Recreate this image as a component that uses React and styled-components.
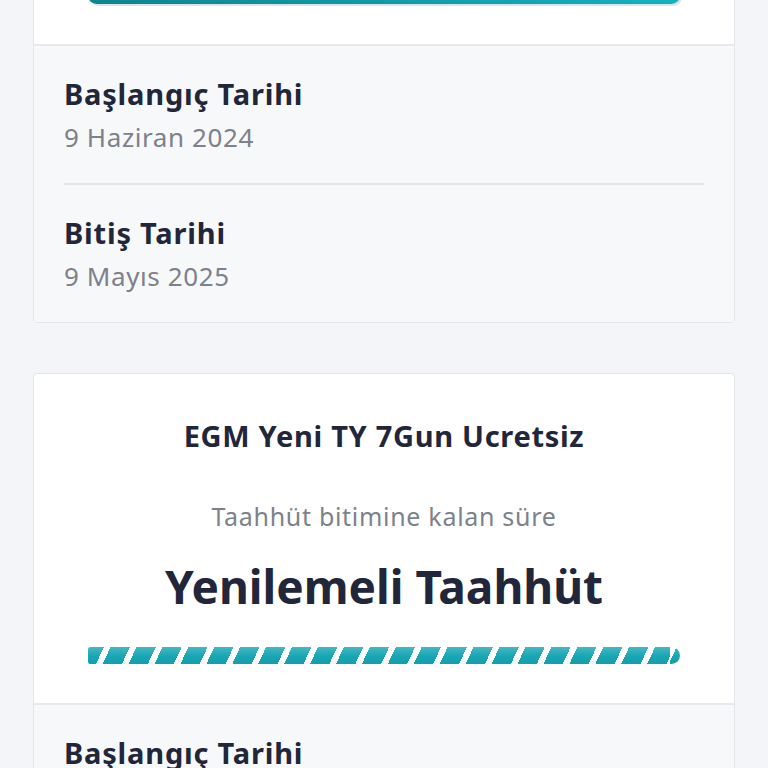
import React from "react";
import styled, { createGlobalStyle } from "styled-components";

const GlobalStyle = createGlobalStyle`
    body {
        margin: 0;
        background-color: #f4f5f8;
        font-family: "Noto Sans", "Open Sans", sans-serif;
    }
`;

const Page = styled.main`
    width: 768px;
    height: 768px;
    overflow: hidden;
    padding: 0 33px;
    box-sizing: border-box;
`;

const CardList = styled.div`
    display: flex;
    flex-direction: column;
    gap: 50px;
    margin-top: -14px;
`;

const Card = styled.section`
    border: 1px solid #e3e5ea;
    border-radius: 4px;
    overflow: hidden;
    background-color: #ffffff;
`;

const Summary = styled.div`
    display: flex;
    flex-direction: column;
    align-items: center;
    padding: ${props => props.$compact ? "0 54px 40px" : "44px 54px 39px"};
    border-bottom: 2px solid #e6e8ec;
`;

const PackageName = styled.h2`
    margin: 0;
    font-size: 29px;
    font-weight: 700;
    letter-spacing: 0.7px;
    line-height: 36px;
    color: #22263a;
`;

const RemainingLabel = styled.p`
    margin: 45px 0 0 0;
    font-size: 25px;
    font-weight: 400;
    letter-spacing: 0.7px;
    line-height: 34px;
    color: #7d818b;
`;

const RemainingValue = styled.p`
    margin: 23px 0 0 0;
    font-size: 46px;
    font-weight: 700;
    line-height: 60px;
    color: #22263a;
`;

const Track = styled.div`
    width: 592px;
    height: 17px;
    margin-top: ${props => props.$compact ? "0" : "31px"};
    border-radius: ${props => props.$striped ? "3px 9px 9px 3px" : "9px"};
    background:
        linear-gradient(to bottom, rgba(255, 255, 255, 0.2), rgba(255, 255, 255, 0) 55%, rgba(0, 0, 0, 0.05)),
        ${props => props.$striped
            ? "repeating-linear-gradient(115deg, #ffffff 0 6px, #17a6b3 6px 23.5px)"
            : "linear-gradient(to right, #0c8a93, #13b7c8)"};
    background-position: ${props => props.$striped ? "-10px 0" : "0 0"};
    box-shadow: ${props => props.$striped ? "none" : "2px 2px 0 #dfe2e6"};
`;

const Dates = styled.div`
    background-color: #f7f8fa;
    padding: 0 30px;
`;

const DateRow = styled.div`
    padding: 28px 0 29px;
    border-bottom: ${props => props.$last ? "none" : "2px solid #e4e6ea"};
`;

const DateLabel = styled.h3`
    margin: 0;
    font-size: 29px;
    font-weight: 700;
    letter-spacing: 0.8px;
    line-height: 40px;
    color: #22263a;
`;

const DateValue = styled.p`
    margin: 6px 0 0 0;
    font-size: 26px;
    font-weight: 400;
    letter-spacing: 0.6px;
    line-height: 34px;
    color: #7d818b;
`;

const subscriptions = [
    {
        name: "EGM Yeni TY 7Gun Ucretsiz",
        remaining: "334 Gün",
        striped: false,
        compact: true,
        start: "9 Haziran 2024",
        end: "9 Mayıs 2025",
    },
    {
        name: "EGM Yeni TY 7Gun Ucretsiz",
        remaining: "Yenilemeli Taahhüt",
        striped: true,
        compact: false,
        start: "9 Haziran 2024",
        end: "9 Mayıs 2025",
    },
];

// the first card is scrolled past, only its bar still shows
function subscriptionCard(item, index) {
    return (
        <Card key={index}>
            <Summary $compact={item.compact}>
                {!item.compact && (
                    <>
                        <PackageName>{item.name}</PackageName>
                        <RemainingLabel>Taahhüt bitimine kalan süre</RemainingLabel>
                        <RemainingValue>{item.remaining}</RemainingValue>
                    </>
                )}
                <Track $striped={item.striped} $compact={item.compact} />
            </Summary>
            <Dates>
                <DateRow>
                    <DateLabel>Başlangıç Tarihi</DateLabel>
                    <DateValue>{item.start}</DateValue>
                </DateRow>
                <DateRow $last>
                    <DateLabel>Bitiş Tarihi</DateLabel>
                    <DateValue>{item.end}</DateValue>
                </DateRow>
            </Dates>
        </Card>
    );
}

function App() {
    return (
        <>
            <GlobalStyle />
            <Page>
                <CardList>
                    {subscriptions.map((item, index) => subscriptionCard(item, index))}
                </CardList>
            </Page>
        </>
    );
}

export default App;
